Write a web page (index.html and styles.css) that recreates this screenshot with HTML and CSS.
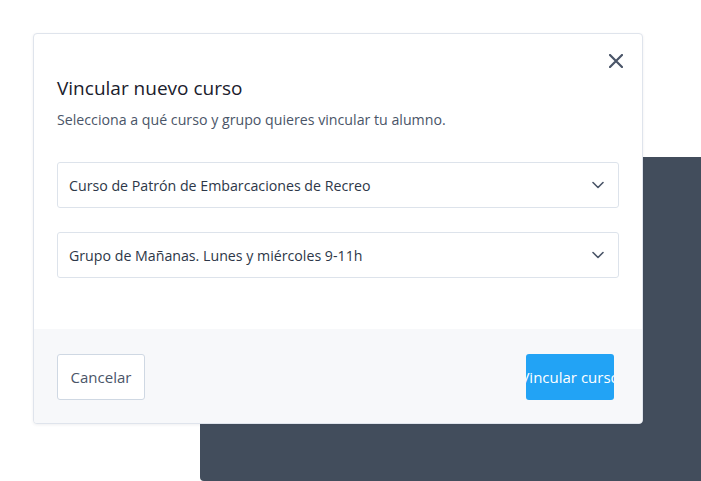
FILE: index.html
```html
<!DOCTYPE html>
<html lang="es">

<head>
    <meta charset="UTF-8">
    <meta name="viewport" content="width=device-width, initial-scale=1.0">
    <title>Vincular nuevo curso</title>
    <link rel="stylesheet" href="styles.css">
</head>

<body>
    <div class="stage">
        <div class="backdrop-panel"></div>

        <div class="modal">
            <button class="close" aria-label="Cerrar">
                <svg width="14" height="14" viewBox="0 0 14 14">
                    <path d="M1 1L13 13M13 1L1 13" stroke="#4a5568" stroke-width="2.2" stroke-linecap="round" fill="none" />
                </svg>
            </button>

            <div class="modal-body">
                <h3 class="title">Vincular nuevo curso</h3>
                <p class="subtitle">Selecciona a qué curso y grupo quieres vincular tu alumno.</p>

                <div class="select">
                    <span>Curso de Patrón de Embarcaciones de Recreo</span>
                    <svg width="12" height="8" viewBox="0 0 12 8">
                        <path d="M1 1.5L6 6.5L11 1.5" stroke="#4a5568" stroke-width="1.6" fill="none" stroke-linecap="round" stroke-linejoin="round" />
                    </svg>
                </div>

                <div class="select">
                    <span>Grupo de Mañanas. Lunes y miércoles 9-11h</span>
                    <svg width="12" height="8" viewBox="0 0 12 8">
                        <path d="M1 1.5L6 6.5L11 1.5" stroke="#4a5568" stroke-width="1.6" fill="none" stroke-linecap="round" stroke-linejoin="round" />
                    </svg>
                </div>
            </div>

            <div class="modal-footer">
                <button class="btn btn-outline">Cancelar</button>
                <button class="btn btn-primary">Vincular curso</button>
            </div>
        </div>
    </div>
</body>

</html>
```

FILE: styles.css
```css
*,
*::before,
*::after {
    box-sizing: border-box;
}

body {
    margin: 0;
    background-color: #ffffff;
    font-family: "Open Sans", "Noto Sans", sans-serif;
    overflow: hidden;
}

.stage {
    display: grid;
    height: 481px;
}

.backdrop-panel {
    grid-area: 1 / 1;
    margin: 157px 0 0 200px;
    background-color: #424d5c;
    border-radius: 0 0 0 4px;
}

.modal {
    grid-area: 1 / 1;
    position: relative;
    align-self: start;
    width: 610px;
    margin: 33px 0 0 33px;
    background-color: #ffffff;
    border: 1px solid #dfe4ec;
    border-radius: 4px;
    box-shadow: 0 1px 3px rgba(45, 55, 72, 0.08);
    overflow: hidden;
}

.close {
    position: absolute;
    top: 19px;
    right: 18px;
    width: 16px;
    height: 16px;
    padding: 0;
    border: none;
    background: none;
    display: flex;
    align-items: center;
    justify-content: center;
    cursor: pointer;
}

.modal-body {
    padding: 40px 23px 51px 23px;
}

.title {
    margin: 0;
    font-size: 19px;
    line-height: 28px;
    font-weight: 500;
    color: #1a202c;
}

.subtitle {
    margin: 8px 0 32px;
    font-size: 14.2px;
    line-height: 20px;
    color: #4a5568;
}

.select {
    display: flex;
    align-items: center;
    justify-content: space-between;
    height: 46px;
    padding: 0 14px 0 11px;
    border: 1px solid #dde3eb;
    border-radius: 3px;
    font-size: 14.2px;
    color: #2d3748;
}

.select + .select {
    margin-top: 24px;
}

.modal-footer {
    display: flex;
    justify-content: space-between;
    padding: 25px 28px 23px 23px;
    background-color: #f7f8fa;
}

.btn {
    height: 46px;
    width: 88px;
    border-radius: 3px;
    font-family: "Open Sans", "Noto Sans", sans-serif;
    font-size: 15px;
    font-weight: 500;
    display: flex;
    align-items: center;
    justify-content: center;
    white-space: nowrap;
    overflow: hidden;
    padding: 0;
    cursor: pointer;
}

.btn-outline {
    background-color: #ffffff;
    border: 1px solid #cfd8e3;
    color: #4a5568;
}

.btn-primary {
    background-color: #22a3f5;
    border: none;
    color: #ffffff;
}
```
